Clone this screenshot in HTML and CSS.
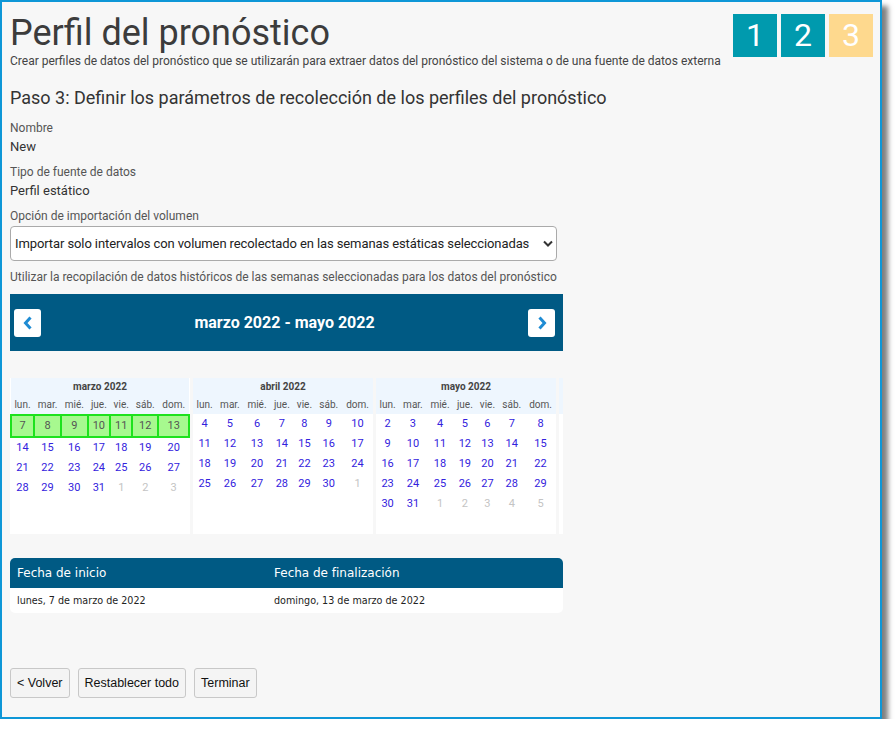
FILE: index.html
```html
<!DOCTYPE html>
<html lang="es">
<head>
  <meta charset="UTF-8">
  <meta name="viewport" content="width=device-width, initial-scale=1.0">
  <title>Perfil del pronóstico</title>
  <link rel="stylesheet" href="styles.css">
</head>
<body>
  <div class="frame">
    <div class="page-head">
      <div class="titles">
        <h1>Perfil del pronóstico</h1>
        <p class="subtitle">Crear perfiles de datos del pronóstico que se utilizarán para extraer datos del pronóstico del sistema o de una fuente de datos externa</p>
      </div>
      <div class="steps">
        <span class="step">1</span>
        <span class="step">2</span>
        <span class="step current">3</span>
      </div>
    </div>

    <h2>Paso 3: Definir los parámetros de recolección de los perfiles del pronóstico</h2>

    <div class="field">
      <div class="field-label">Nombre</div>
      <div class="field-value">New</div>
    </div>
    <div class="field">
      <div class="field-label">Tipo de fuente de datos</div>
      <div class="field-value">Perfil estático</div>
    </div>
    <div class="field">
      <label class="field-label" for="volumeOption">Opción de importación del volumen</label>
      <div class="select-wrap">
        <select id="volumeOption">
          <option>Importar solo intervalos con volumen recolectado en las semanas estáticas seleccionadas</option>
          <option>Importar todos los intervalos</option>
        </select>
        <svg class="select-arrow" width="10" height="7" viewBox="0 0 10 7"><polyline points="1,1.5 5,5.5 9,1.5" fill="none" stroke="#333" stroke-width="2"/></svg>
      </div>
    </div>
    <p class="hint">Utilizar la recopilación de datos históricos de las semanas seleccionadas para los datos del pronóstico</p>

    <div class="cal-nav">
      <button class="nav-btn" type="button" aria-label="Anterior">
        <svg width="12" height="16" viewBox="0 0 12 16"><polyline points="8.5,2.5 3.5,8 8.5,13.5" fill="none" stroke="#1e8bd3" stroke-width="3"/></svg>
      </button>
      <div class="cal-title">marzo 2022 - mayo 2022</div>
      <button class="nav-btn" type="button" aria-label="Siguiente">
        <svg width="12" height="16" viewBox="0 0 12 16"><polyline points="3.5,2.5 8.5,8 3.5,13.5" fill="none" stroke="#1e8bd3" stroke-width="3"/></svg>
      </button>
    </div>

    <div class="months" id="months"></div>

    <div class="range">
      <table>
        <thead>
          <tr><th class="col-start">Fecha de inicio</th><th>Fecha de finalización</th></tr>
        </thead>
        <tbody>
          <tr><td>lunes, 7 de marzo de 2022</td><td>domingo, 13 de marzo de 2022</td></tr>
        </tbody>
      </table>
    </div>

    <div class="actions">
      <button class="btn" type="button">&lt; Volver</button>
      <button class="btn" type="button">Restablecer todo</button>
      <button class="btn" type="button">Terminar</button>
    </div>
  </div>

  <script>
    // Build the month grids; only weeks that start inside the month are listed
    const MONTHS = ['enero', 'febrero', 'marzo', 'abril', 'mayo', 'junio', 'julio', 'agosto', 'septiembre', 'octubre', 'noviembre', 'diciembre'];
    const DAYS = ['lun.', 'mar.', 'mié.', 'jue.', 'vie.', 'sáb.', 'dom.'];
    const selStart = new Date(2022, 2, 7);
    const selEnd = new Date(2022, 2, 13);
    const container = document.getElementById('months');

    function monthTable(year, month) {
      const wrap = document.createElement('div');
      wrap.className = 'month';
      let html = '<table><thead><tr><th colspan="7" class="month-title">' + MONTHS[month] + ' ' + year + '</th></tr><tr>';
      DAYS.forEach(d => { html += '<th class="wd">' + d + '</th>'; });
      html += '</tr></thead><tbody>';

      const d = new Date(year, month, 1);
      while (d.getDay() !== 1) d.setDate(d.getDate() + 1);

      for (let r = 0; r < 6; r++) {
        if (d.getMonth() !== month) {
          html += '<tr><td colspan="7">&nbsp;</td></tr>';
          continue;
        }
        const picked = d >= selStart && d <= selEnd;
        html += '<tr' + (picked ? ' class="picked"' : '') + '>';
        for (let i = 0; i < 7; i++) {
          const other = d.getMonth() !== month;
          html += '<td class="' + (other ? 'other' : 'day') + '">' + d.getDate() + '</td>';
          d.setDate(d.getDate() + 1);
        }
        html += '</tr>';
      }
      html += '</tbody></table>';
      wrap.innerHTML = html;
      return wrap;
    }

    [2, 3, 4].forEach(m => container.appendChild(monthTable(2022, m)));

    // next month peeks in at the edge of the strip
    const peek = document.createElement('div');
    peek.className = 'month peek';
    peek.innerHTML = '<div class="peek-head"></div>';
    container.appendChild(peek);
  </script>
</body>
</html>
```

FILE: styles.css
```css
body {
  margin: 0;
  background: #FFFFFF;
  font-family: Roboto, 'Liberation Sans', Arial, sans-serif;
  color: #333333;
}
.frame {
  box-sizing: border-box;
  width: 882px;
  height: 719px;
  border: 2px solid #0e97d7;
  background: #F7F7F7;
  box-shadow: 6px 6px 5px rgba(0, 0, 0, 0.5);
  padding: 11px 7px 19px 8px;
  display: flex;
  flex-direction: column;
  overflow: hidden;
}
.page-head {
  display: flex;
  justify-content: space-between;
  align-items: flex-start;
}
h1 {
  margin: 0;
  font-size: 36px;
  line-height: 40px;
  font-weight: 400;
  color: #3c3c3c;
}
.subtitle {
  margin: 1px 0 0;
  font-size: 12px;
  line-height: 14px;
  color: #444444;
}
.steps {
  display: flex;
  gap: 4px;
  margin-top: 1px;
}
.step {
  width: 44px;
  height: 43px;
  background: #009aae;
  color: #FFFFFF;
  font-size: 32px;
  line-height: 43px;
  text-align: center;
}
.step.current {
  background: #fed98e;
}
h2 {
  margin: 19px 0 12px;
  font-size: 18px;
  line-height: 22px;
  font-weight: 400;
  color: #333333;
}
.field {
  margin-bottom: 10px;
}
.field-label {
  display: block;
  font-size: 12px;
  line-height: 14px;
  color: #555555;
}
.field-value {
  margin-top: 4px;
  font-size: 13px;
  line-height: 16px;
  color: #333333;
}
.select-wrap {
  position: relative;
  width: 547px;
  margin-top: 3px;
}
.select-wrap select {
  appearance: none;
  -webkit-appearance: none;
  box-sizing: border-box;
  width: 100%;
  height: 35px;
  padding: 0 14px 0 4px;
  border: 1px solid #aaaaaa;
  border-radius: 4px;
  background: #FFFFFF;
  font-family: Roboto, sans-serif;
  font-size: 13px;
  letter-spacing: -0.1px;
  color: #222222;
}
.select-arrow {
  position: absolute;
  right: 4px;
  top: 14px;
  pointer-events: none;
}
.hint {
  margin: -1px 0 0;
  font-size: 12px;
  line-height: 14px;
  color: #555555;
}
.cal-nav {
  margin-top: 10px;
  width: 553px;
  height: 57px;
  background: #005a84;
  display: flex;
  align-items: center;
  justify-content: space-between;
  padding: 0 8px 0 4px;
  box-sizing: border-box;
}
.nav-btn {
  width: 27px;
  height: 28px;
  padding: 0;
  border: none;
  border-radius: 3px;
  background: #FFFFFF;
  display: flex;
  align-items: center;
  justify-content: center;
  cursor: pointer;
}
.cal-title {
  color: #FFFFFF;
  font-size: 16px;
  font-weight: 700;
}
.months {
  margin-top: 27px;
  width: 553px;
  display: flex;
  gap: 3px;
  overflow: hidden;
}
.month {
  flex: 0 0 180px;
  background: #FFFFFF;
  height: 156px;
}
.peek-head {
  height: 36px;
  background: #eef6fe;
}
.month table {
  width: 100%;
  border-collapse: collapse;
  font-size: 11px;
}
.month thead {
  background: #eef6fe;
}
.month-title {
  height: 17px;
  padding: 0;
  font-size: 10px;
  font-weight: 700;
  color: #444444;
}
.wd {
  height: 19px;
  padding: 0 2px;
  font-size: 10px;
  font-weight: 400;
  color: #555555;
}
.month td {
  height: 20px;
  padding: 0;
  text-align: center;
  line-height: 16px;
}
.day {
  color: #3322dd;
}
.other {
  color: #c4c4c4;
}
.picked td {
  background: #a7f98f;
  border: 2px solid #1de21d;
  color: #555555;
}
.range {
  margin-top: 24px;
  width: 553px;
  border-radius: 5px;
  overflow: hidden;
  background: #FFFFFF;
}
.range table {
  width: 100%;
  border-collapse: collapse;
  font-family: 'DejaVu Sans', Verdana, sans-serif;
}
.range th {
  height: 30px;
  padding: 0 7px;
  background: #005a84;
  color: #FFFFFF;
  font-size: 12px;
  font-weight: 400;
  text-align: left;
}
.range .col-start {
  width: 243px;
}
.range td {
  height: 25px;
  padding: 0 7px;
  font-size: 9.6px;
  color: #222222;
}
.actions {
  margin-top: auto;
  display: flex;
  gap: 8px;
}
.btn {
  height: 30px;
  padding: 0 6px;
  border: 1px solid #c8c8c8;
  border-radius: 3px;
  background: #F4F4F4;
  font-family: 'Liberation Sans', Arial, sans-serif;
  font-size: 12.5px;
  color: #111111;
  cursor: pointer;
}
```
